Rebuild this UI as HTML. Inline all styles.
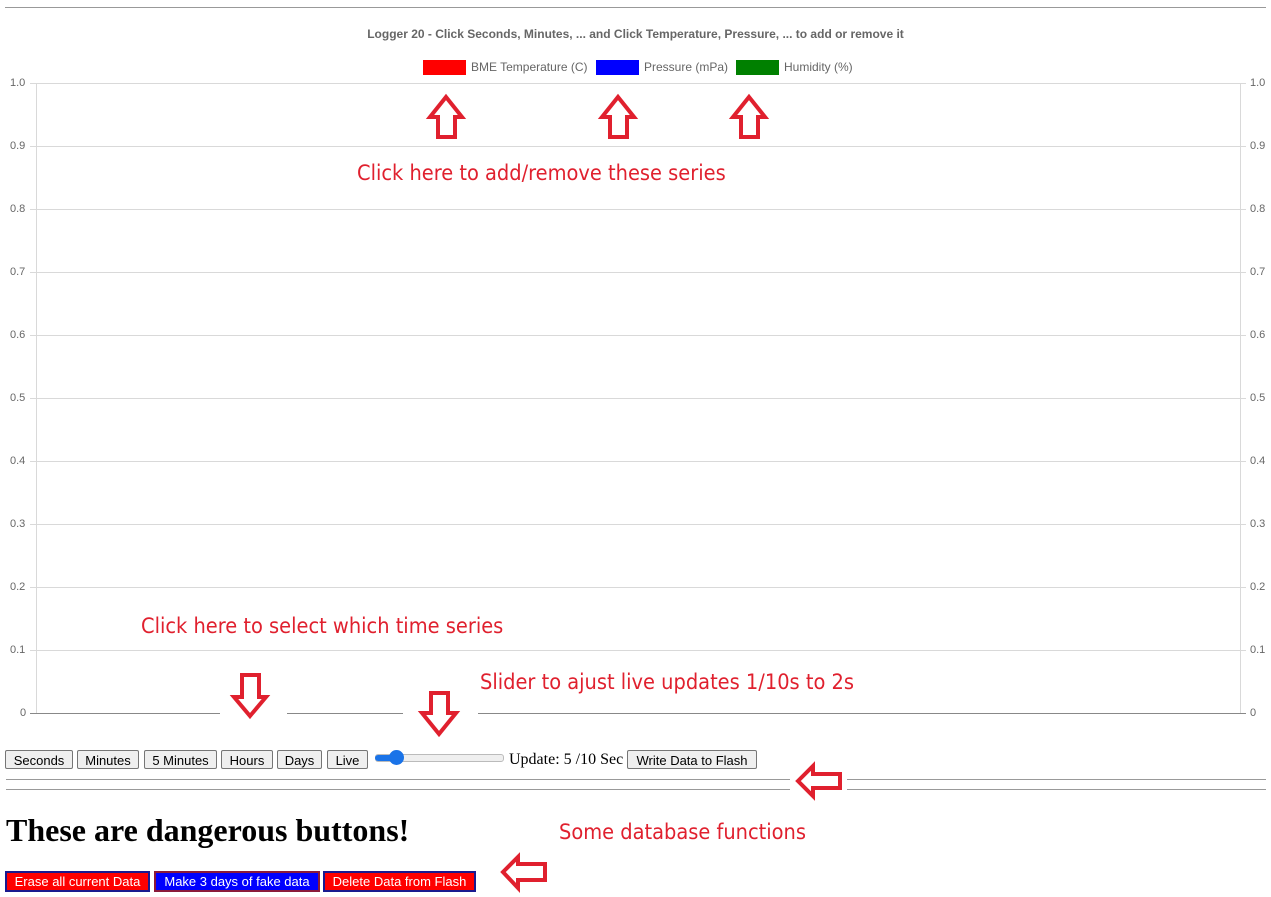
<!DOCTYPE html>
<html><head><meta charset="utf-8"><style>
body{margin:0;width:1271px;height:897px;position:relative;background:#fff;font-family:"Liberation Sans",Arial,sans-serif;overflow:hidden}
.a{position:absolute}
.lab{position:absolute;font-size:11px;color:#666}
.ann{position:absolute;font-family:"Comic Sans MS","DejaVu Sans Condensed","DejaVu Sans",sans-serif;color:#e0202e;font-size:21.6px;white-space:nowrap}
.btn{position:absolute;top:750px;height:19px;border:1px solid #767676;border-radius:2px;background:#efefef;font-size:13px;line-height:19px;text-align:center;color:#000;box-sizing:border-box}
.db{position:absolute;top:871px;height:21px;border:2px solid #1a1a8f;font-size:13px;color:#fff;line-height:17px;text-align:center;box-sizing:border-box}
</style></head><body>
<div class="a" style="left:5px;right:5px;top:7px;height:1px;background:#999"></div>
<div class="a" style="left:0;width:1271px;top:27px;text-align:center;font-size:12px;font-weight:bold;color:#666">Logger 20 - Click Seconds, Minutes, ... and Click Temperature, Pressure, ... to add or remove it</div>
<div class="a" style="left:423px;top:60px;width:43px;height:15px;background:#f00"></div>
<div class="lab" style="left:471px;top:60px;font-size:12px">BME Temperature (C)</div>
<div class="a" style="left:596px;top:60px;width:43px;height:15px;background:#00f"></div>
<div class="lab" style="left:644px;top:60px;font-size:12px">Pressure (mPa)</div>
<div class="a" style="left:736px;top:60px;width:43px;height:15px;background:#008000"></div>
<div class="lab" style="left:784px;top:60px;font-size:12px">Humidity (%)</div>
<svg class="a" style="left:0;top:0" width="1271" height="897">
<g stroke="#d9d9d9" stroke-width="1">
<line x1="30" y1="83.5" x2="1246" y2="83.5"/><line x1="30" y1="146.5" x2="1246" y2="146.5"/><line x1="30" y1="209.5" x2="1246" y2="209.5"/><line x1="30" y1="272.5" x2="1246" y2="272.5"/><line x1="30" y1="335.5" x2="1246" y2="335.5"/><line x1="30" y1="398.5" x2="1246" y2="398.5"/><line x1="30" y1="461.5" x2="1246" y2="461.5"/><line x1="30" y1="524.5" x2="1246" y2="524.5"/><line x1="30" y1="587.5" x2="1246" y2="587.5"/><line x1="30" y1="650.5" x2="1246" y2="650.5"/>
<line x1="36.5" y1="83" x2="36.5" y2="713"/><line x1="1240.5" y1="83" x2="1240.5" y2="713"/>
</g>
<line x1="30" y1="713.5" x2="1246" y2="713.5" stroke="#888"/>
<line x1="6" y1="779.5" x2="1266" y2="779.5" stroke="#999"/>
<line x1="6" y1="789.5" x2="1266" y2="789.5" stroke="#999"/>
<rect x="220" y="705" width="67" height="15" fill="#fff"/>
<rect x="403" y="705" width="75" height="15" fill="#fff"/>
<rect x="790" y="772" width="57" height="25" fill="#fff"/>
<g fill="#fff" stroke="#e0202e" stroke-width="4" stroke-linejoin="miter">
<polygon points="446,97 462,117 455,117 455,137 438,137 438,117 430,117"/>
<polygon points="618,97 634,117 627,117 627,137 610,137 610,117 602,117"/>
<polygon points="749,97 765,117 758,117 758,137 741,137 741,117 733,117"/>
<polygon points="250,716 266,697 259,697 259,675 242,675 242,697 234,697"/>
<polygon points="439,734 456,713 448,713 448,693 431,693 431,713 422,713"/>
<polygon points="798,781 813,766 813,774 840,774 840,788 813,788 813,796"/>
<polygon points="503,872 518,857 518,864 545,864 545,880 518,880 518,888"/>
</g>
</svg>
<div class="lab" style="left:10px;top:77px">1.0</div><div class="lab" style="left:10px;top:140px">0.9</div><div class="lab" style="left:10px;top:203px">0.8</div><div class="lab" style="left:10px;top:266px">0.7</div><div class="lab" style="left:10px;top:329px">0.6</div><div class="lab" style="left:10px;top:392px">0.5</div><div class="lab" style="left:10px;top:455px">0.4</div><div class="lab" style="left:10px;top:518px">0.3</div><div class="lab" style="left:10px;top:581px">0.2</div><div class="lab" style="left:10px;top:644px">0.1</div><div class="lab" style="left:20px;top:707px">0</div>
<div class="lab" style="left:1250px;top:77px">1.0</div><div class="lab" style="left:1250px;top:140px">0.9</div><div class="lab" style="left:1250px;top:203px">0.8</div><div class="lab" style="left:1250px;top:266px">0.7</div><div class="lab" style="left:1250px;top:329px">0.6</div><div class="lab" style="left:1250px;top:392px">0.5</div><div class="lab" style="left:1250px;top:455px">0.4</div><div class="lab" style="left:1250px;top:518px">0.3</div><div class="lab" style="left:1250px;top:581px">0.2</div><div class="lab" style="left:1250px;top:644px">0.1</div><div class="lab" style="left:1250px;top:707px">0</div>
<div class="ann" style="left:357px;top:161px">Click here to add/remove these series</div>
<div class="ann" style="left:141px;top:614px">Click here to select which time series</div>
<div class="ann" style="left:480px;top:670px">Slider to ajust live updates 1/10s to 2s</div>
<div class="ann" style="left:559px;top:820px">Some database functions</div>
<div class="btn" style="left:5px;width:68px">Seconds</div>
<div class="btn" style="left:77px;width:62px">Minutes</div>
<div class="btn" style="left:144px;width:73px">5 Minutes</div>
<div class="btn" style="left:221px;width:52px">Hours</div>
<div class="btn" style="left:277px;width:45px">Days</div>
<div class="btn" style="left:327px;width:41px">Live</div>
<div class="a" style="left:375px;top:754px;width:127px;height:6px;border-radius:3px;background:#efefef;border:1px solid #bbb"></div>
<div class="a" style="left:375px;top:755px;width:20px;height:6px;border-radius:3px;background:#1a73e8"></div>
<div class="a" style="left:389px;top:750px;width:15px;height:15px;border-radius:50%;background:#1a73e8"></div>
<div class="a" style="left:509px;top:751px;font-family:'Liberation Serif',serif;font-size:16px">Update: 5 /10 Sec</div>
<div class="btn" style="left:627px;width:130px">Write Data to Flash</div>
<div class="a" style="left:6px;top:812px;font-family:'Liberation Serif',serif;font-size:32px;font-weight:bold">These are dangerous buttons!</div>
<div class="db" style="left:5px;width:145px;background:#f00">Erase all current Data</div>
<div class="db" style="left:154px;width:166px;background:#00f;border-color:#8b1a3a">Make 3 days of fake data</div>
<div class="db" style="left:323px;width:153px;background:#f00">Delete Data from Flash</div>
</body></html>
